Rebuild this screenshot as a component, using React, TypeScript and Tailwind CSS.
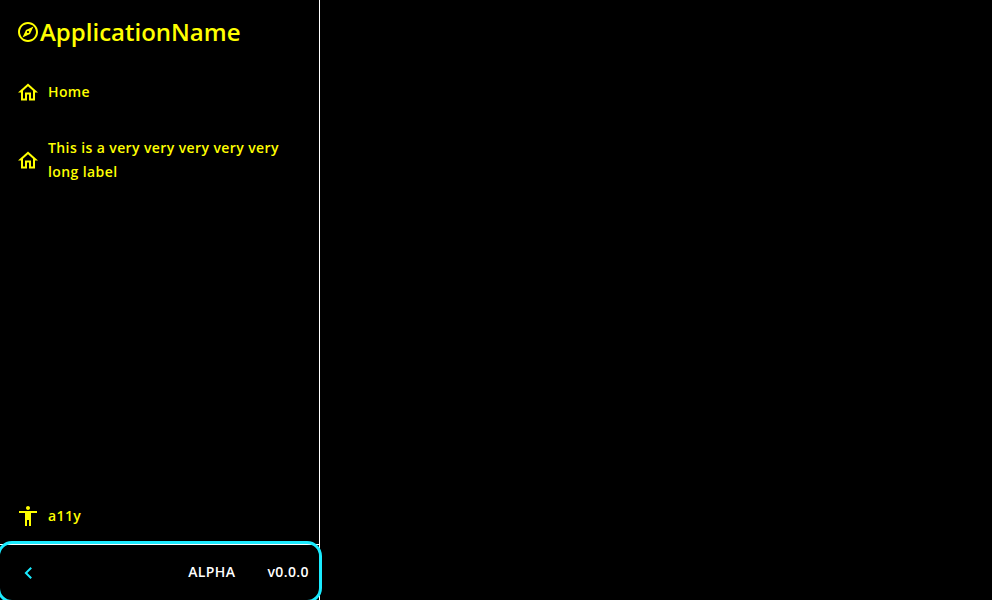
import React from "react";

const icons = {
  explore:
    "M12 2C6.48 2 2 6.48 2 12s4.48 10 10 10 10-4.48 10-10S17.52 2 12 2zm0 18c-4.41 0-8-3.59-8-8s3.59-8 8-8 8 3.59 8 8-3.59 8-8 8zm-5.5-2.5l7.51-3.49L17.5 6.5 9.99 9.99 6.5 17.5zm5.5-6.6c.61 0 1.1.49 1.1 1.1s-.49 1.1-1.1 1.1-1.1-.49-1.1-1.1.49-1.1 1.1-1.1z",
  home: "M12 6.19l5 4.5V18.5h-2v-6H9v6H7v-7.81l5-4.5M12 3.5L2 12.5h3v8h6v-6h2v6h6v-8h3L12 3.5z",
  accessibility:
    "M12 2c1.1 0 2 .9 2 2s-.9 2-2 2-2-.9-2-2 .9-2 2-2zm9 7h-6v13h-2v-6h-2v6H9V9H3V7h18v2z",
  chevronLeft: "M15.91 7.41L14.5 6l-6 6 6 6 1.41-1.41L11.33 12z",
};

function Icon({ name, className = "size-6" }: { name: keyof typeof icons; className?: string }) {
  return (
    <svg viewBox="0 0 24 24" fill="currentColor" className={`shrink-0 ${className}`} aria-hidden="true">
      <path d={icons[name]} />
    </svg>
  );
}

function NavItem({ icon, label }: { icon: keyof typeof icons; label: string }) {
  return (
    <a className="flex items-center gap-2 px-4 py-4 text-sm leading-6 font-semibold tracking-[0.4px]">
      <Icon name={icon} />
      <span>{label}</span>
    </a>
  );
}

export default function App() {
  return (
    <div className="flex h-screen overflow-hidden bg-black font-['Open_Sans',sans-serif]">
      <nav className="flex w-80 flex-col border-r border-white text-[#ffff00]">
        <header className="flex h-16 items-center px-4 text-2xl font-semibold">
          <Icon name="explore" />
          <span>ApplicationName</span>
        </header>
        <div className="flex flex-1 flex-col">
          <NavItem icon="home" label="Home" />
          <NavItem icon="home" label="This is a very very very very very long label" />
        </div>
        <NavItem icon="accessibility" label="a11y" />
        <button className="relative flex h-14 items-center text-sm font-semibold tracking-[0.4px] text-white">
          <span className="absolute inset-x-0 top-0 border-t border-white" />
          <span className="absolute inset-0 rounded-xl outline-[3px] outline-[#1aebff]" />
          <Icon name="chevronLeft" className="mt-px ml-4 size-6 text-[#1aebff]" />
          <span className="ml-auto">ALPHA</span>
          <span className="mr-2.5 ml-8">v0.0.0</span>
        </button>
      </nav>
      <main className="flex-1" />
    </div>
  );
}
